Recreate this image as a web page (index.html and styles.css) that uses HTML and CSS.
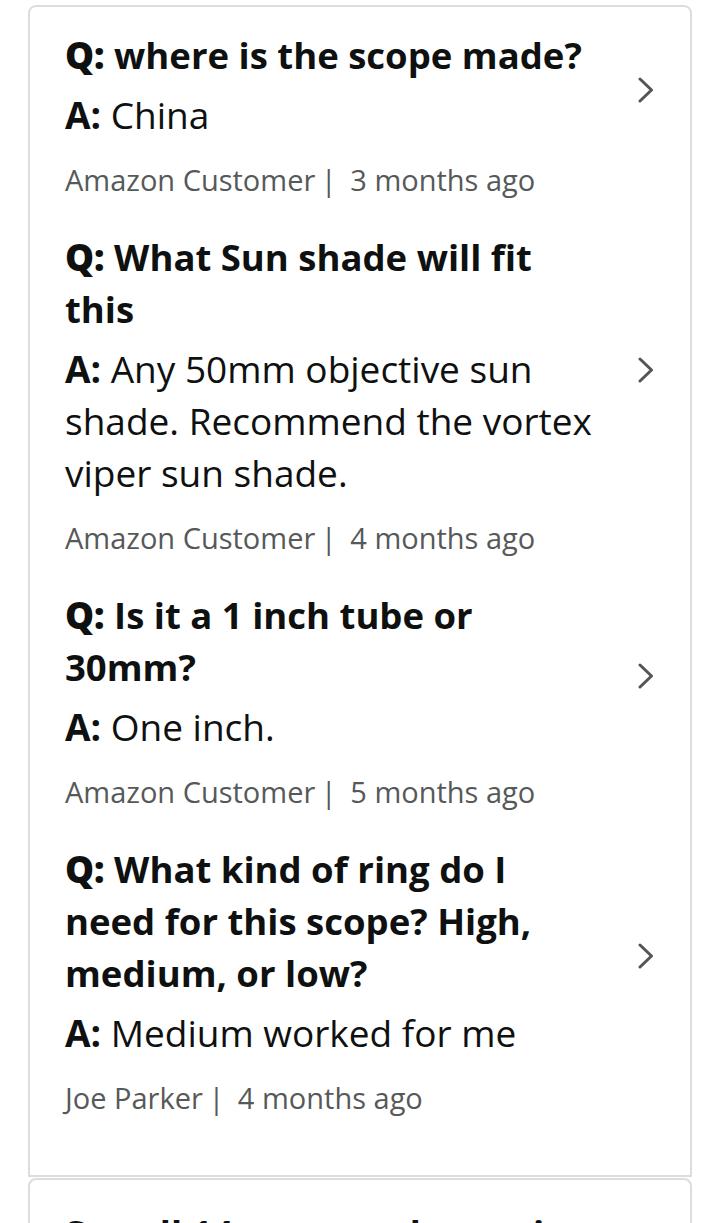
FILE: index.html
```html
<!DOCTYPE html>
<html lang="en">
<head>
<meta charset="utf-8">
<title>Customer questions &amp; answers</title>
<link rel="stylesheet" href="styles.css">
</head>
<body>
<div class="page">
  <section class="card">
    <div class="item">
      <a class="row" href="#">
        <div class="qa">
          <p class="q"><b>Q:</b> where is the scope made?</p>
          <p class="a"><b>A:</b> China</p>
        </div>
        <svg class="chev" viewBox="0 0 16 26" aria-hidden="true"><path d="M2 2 L13.5 13 L2 24"/></svg>
      </a>
      <p class="meta">Amazon Customer <span class="sep">|</span> 3 months ago</p>
    </div>
    <div class="item">
      <a class="row" href="#">
        <div class="qa">
          <p class="q"><b>Q:</b> What Sun shade will fit this</p>
          <p class="a"><b>A:</b> Any 50mm objective sun shade. Recommend the vortex viper sun shade.</p>
        </div>
        <svg class="chev" viewBox="0 0 16 26" aria-hidden="true"><path d="M2 2 L13.5 13 L2 24"/></svg>
      </a>
      <p class="meta">Amazon Customer <span class="sep">|</span> 4 months ago</p>
    </div>
    <div class="item">
      <a class="row" href="#">
        <div class="qa">
          <p class="q"><b>Q:</b> Is it a 1 inch tube or 30mm?</p>
          <p class="a"><b>A:</b> One inch.</p>
        </div>
        <svg class="chev" viewBox="0 0 16 26" aria-hidden="true"><path d="M2 2 L13.5 13 L2 24"/></svg>
      </a>
      <p class="meta">Amazon Customer <span class="sep">|</span> 5 months ago</p>
    </div>
    <div class="item">
      <a class="row" href="#">
        <div class="qa">
          <p class="q"><b>Q:</b> What kind of ring do I need for this scope? High, medium, or low?</p>
          <p class="a"><b>A:</b> Medium worked for me</p>
        </div>
        <svg class="chev" viewBox="0 0 16 26" aria-hidden="true"><path d="M2 2 L13.5 13 L2 24"/></svg>
      </a>
      <p class="meta">Joe Parker <span class="sep">|</span> 4 months ago</p>
    </div>
  </section>
  <section class="card card-next">
    <a class="row" href="#">
      <p class="q see-all">See all 14 answered questions</p>
    </a>
  </section>
</div>
</body>
</html>
```

FILE: styles.css
```css
html, body {
  margin: 0;
  padding: 0;
  background: #ffffff;
}

body {
  font-family: "Open Sans", "Noto Sans", "Liberation Sans", sans-serif;
  color: #0f1111;
  height: 1223px;
  overflow: hidden;
}

.page {
  padding: 5px 28px 0 28px;
}

.card {
  border: 2px solid #dddddd;
  border-radius: 8px 8px 0 0;
  padding: 22px 36px 59px 35px;
  background: #ffffff;
}

.card-next {
  margin-top: 1px;
  padding-top: 27px;
  padding-bottom: 40px;
}

.item + .item {
  margin-top: 33px;
}

.row {
  display: flex;
  align-items: center;
  text-decoration: none;
  color: inherit;
}

.qa {
  flex: 1;
  min-width: 0;
  padding-bottom: 10px;
  padding-right: 32px;
}

.q, .a {
  margin: 0;
  line-height: 52px;
}

.q {
  font-size: 36.5px;
  font-weight: 700;
}

.a {
  margin-top: 8px;
  font-size: 37px;
  font-weight: 400;
}

.a b {
  font-weight: 700;
}

.chev {
  flex: none;
  width: 16px;
  height: 26px;
  fill: none;
  stroke: #555555;
  stroke-width: 3;
  stroke-linecap: round;
  stroke-linejoin: round;
}

.meta {
  margin: 11px 0 0 0;
  font-size: 29px;
  line-height: 36px;
  color: #565959;
}

.sep {
  margin: 0 6px 0 -2px;
}
```
